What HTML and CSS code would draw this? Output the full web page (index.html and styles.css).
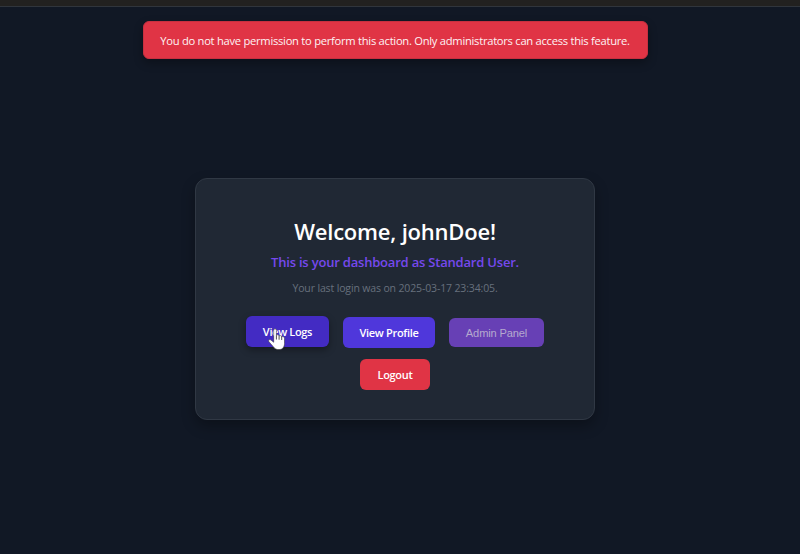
FILE: index.html
```html
<!DOCTYPE html>
<html lang="en">
<head>
<meta charset="utf-8">
<title>Dashboard</title>
<link rel="stylesheet" href="styles.css">
</head>
<body>
<div class="topbar"></div>
<main class="page">
  <div class="toast" role="alert"><span>You do not have permission to perform this action. Only administrators can access this feature.</span></div>
  <section class="card">
    <h1>Welcome, johnDoe!</h1>
    <p class="role">This is your dashboard as Standard User.</p>
    <p class="last-login">Your last login was on 2025-03-17 23:34:05.</p>
    <div class="actions">
      <button class="btn logs hovered">View Logs</button>
      <button class="btn profile">View Profile</button>
      <button class="btn admin" disabled>Admin Panel</button>
      <button class="btn logout">Logout</button>
    </div>
  </section>
</main>
<svg class="cursor" viewBox="0 0 18 23" width="18" height="23" aria-hidden="true">
  <path d="M5.7 2.2C5.7.3 8.4.3 8.4 2.2V7.4C8.8 6.5 10.9 6.6 11.1 8C11.7 7.2 13.5 7.5 13.7 8.9C14.5 8.1 16.5 8.7 16.5 10.4V15.5C16.5 19.2 14.4 21.6 10.9 21.6C8.3 21.6 7 20.9 5.3 18.7L.9 13.7C-.2 12.2 1.6 10.8 3 12L5.7 14.3Z"/>
  <path class="cursor-lines" d="M8.4 7.4V11.5M11.1 8V11.7M13.7 9V12"/>
</svg>
</body>
</html>
```
FILE: styles.css
```css
* { box-sizing: border-box; }
body {
  margin: 0;
  height: 554px;
  overflow: hidden;
  background: #111825;
  font-family: "Open Sans", "Noto Sans", sans-serif;
  color: #fff;
}
.topbar { height: 7px; background: #222120; border-bottom: 1px solid #30353c; }
.page {
  width: 790px;
  display: flex;
  flex-direction: column;
  align-items: center;
  padding-top: 14px;
}
.toast {
  width: 505px;
  height: 38px;
  display: flex;
  align-items: center;
  justify-content: center;
  border-radius: 6px;
  background: #e03445;
  border: 1px solid #c83040;
  box-shadow: 0 4px 10px rgba(0, 0, 0, .3);
  font-size: 11.2px;
  letter-spacing: -0.27px;
  color: #fdf3f4;
  white-space: nowrap;
}
.card {
  width: 400px;
  height: 242px;
  margin-top: 119px;
  padding-top: 35px;
  border: 1px solid #303844;
  border-radius: 12px;
  background: #202834;
  box-shadow: 0 6px 14px rgba(0, 0, 0, .3);
  text-align: center;
  white-space: nowrap;
}
h1 { margin: 0; font-size: 22px; line-height: 34px; font-weight: 600; letter-spacing: -0.2px; }
.role { margin: 4px 0 0; font-size: 13px; line-height: 20px; font-weight: 600; letter-spacing: -0.2px; color: #7648ed; }
.last-login { margin: 7px 0 0; font-size: 10.5px; line-height: 18px; letter-spacing: -0.14px; color: #67707d; }
.actions {
  display: flex;
  flex-wrap: wrap;
  justify-content: center;
  align-items: center;
  gap: 11px 14px;
  width: 300px;
  margin: 20px auto 0;
}
.btn {
  height: 31px;
  padding: 0;
  border: 0;
  border-radius: 6px;
  font: 600 11px "Open Sans", "Noto Sans", sans-serif;
  letter-spacing: -0.33px;
  color: #fff;
  white-space: nowrap;
}
.logs { width: 83px; background: #432bc3; }
.hovered { transform: translateY(-1px); box-shadow: 0 3px 7px rgba(0, 0, 0, .35); }
.profile { width: 92px; background: #4f37db; }
.admin { width: 95px; height: 29px; background: #6740b5; color: #b5a9cf; font: 11.1px "Liberation Sans", sans-serif; letter-spacing: -0.15px; }
.logout { width: 70px; background: #e03445; }
.cursor { position: absolute; left: 268px; top: 328px; fill: #fff; stroke: #222; stroke-width: .5; }
.cursor-lines { fill: none; stroke: #222; stroke-width: .8; }
```
